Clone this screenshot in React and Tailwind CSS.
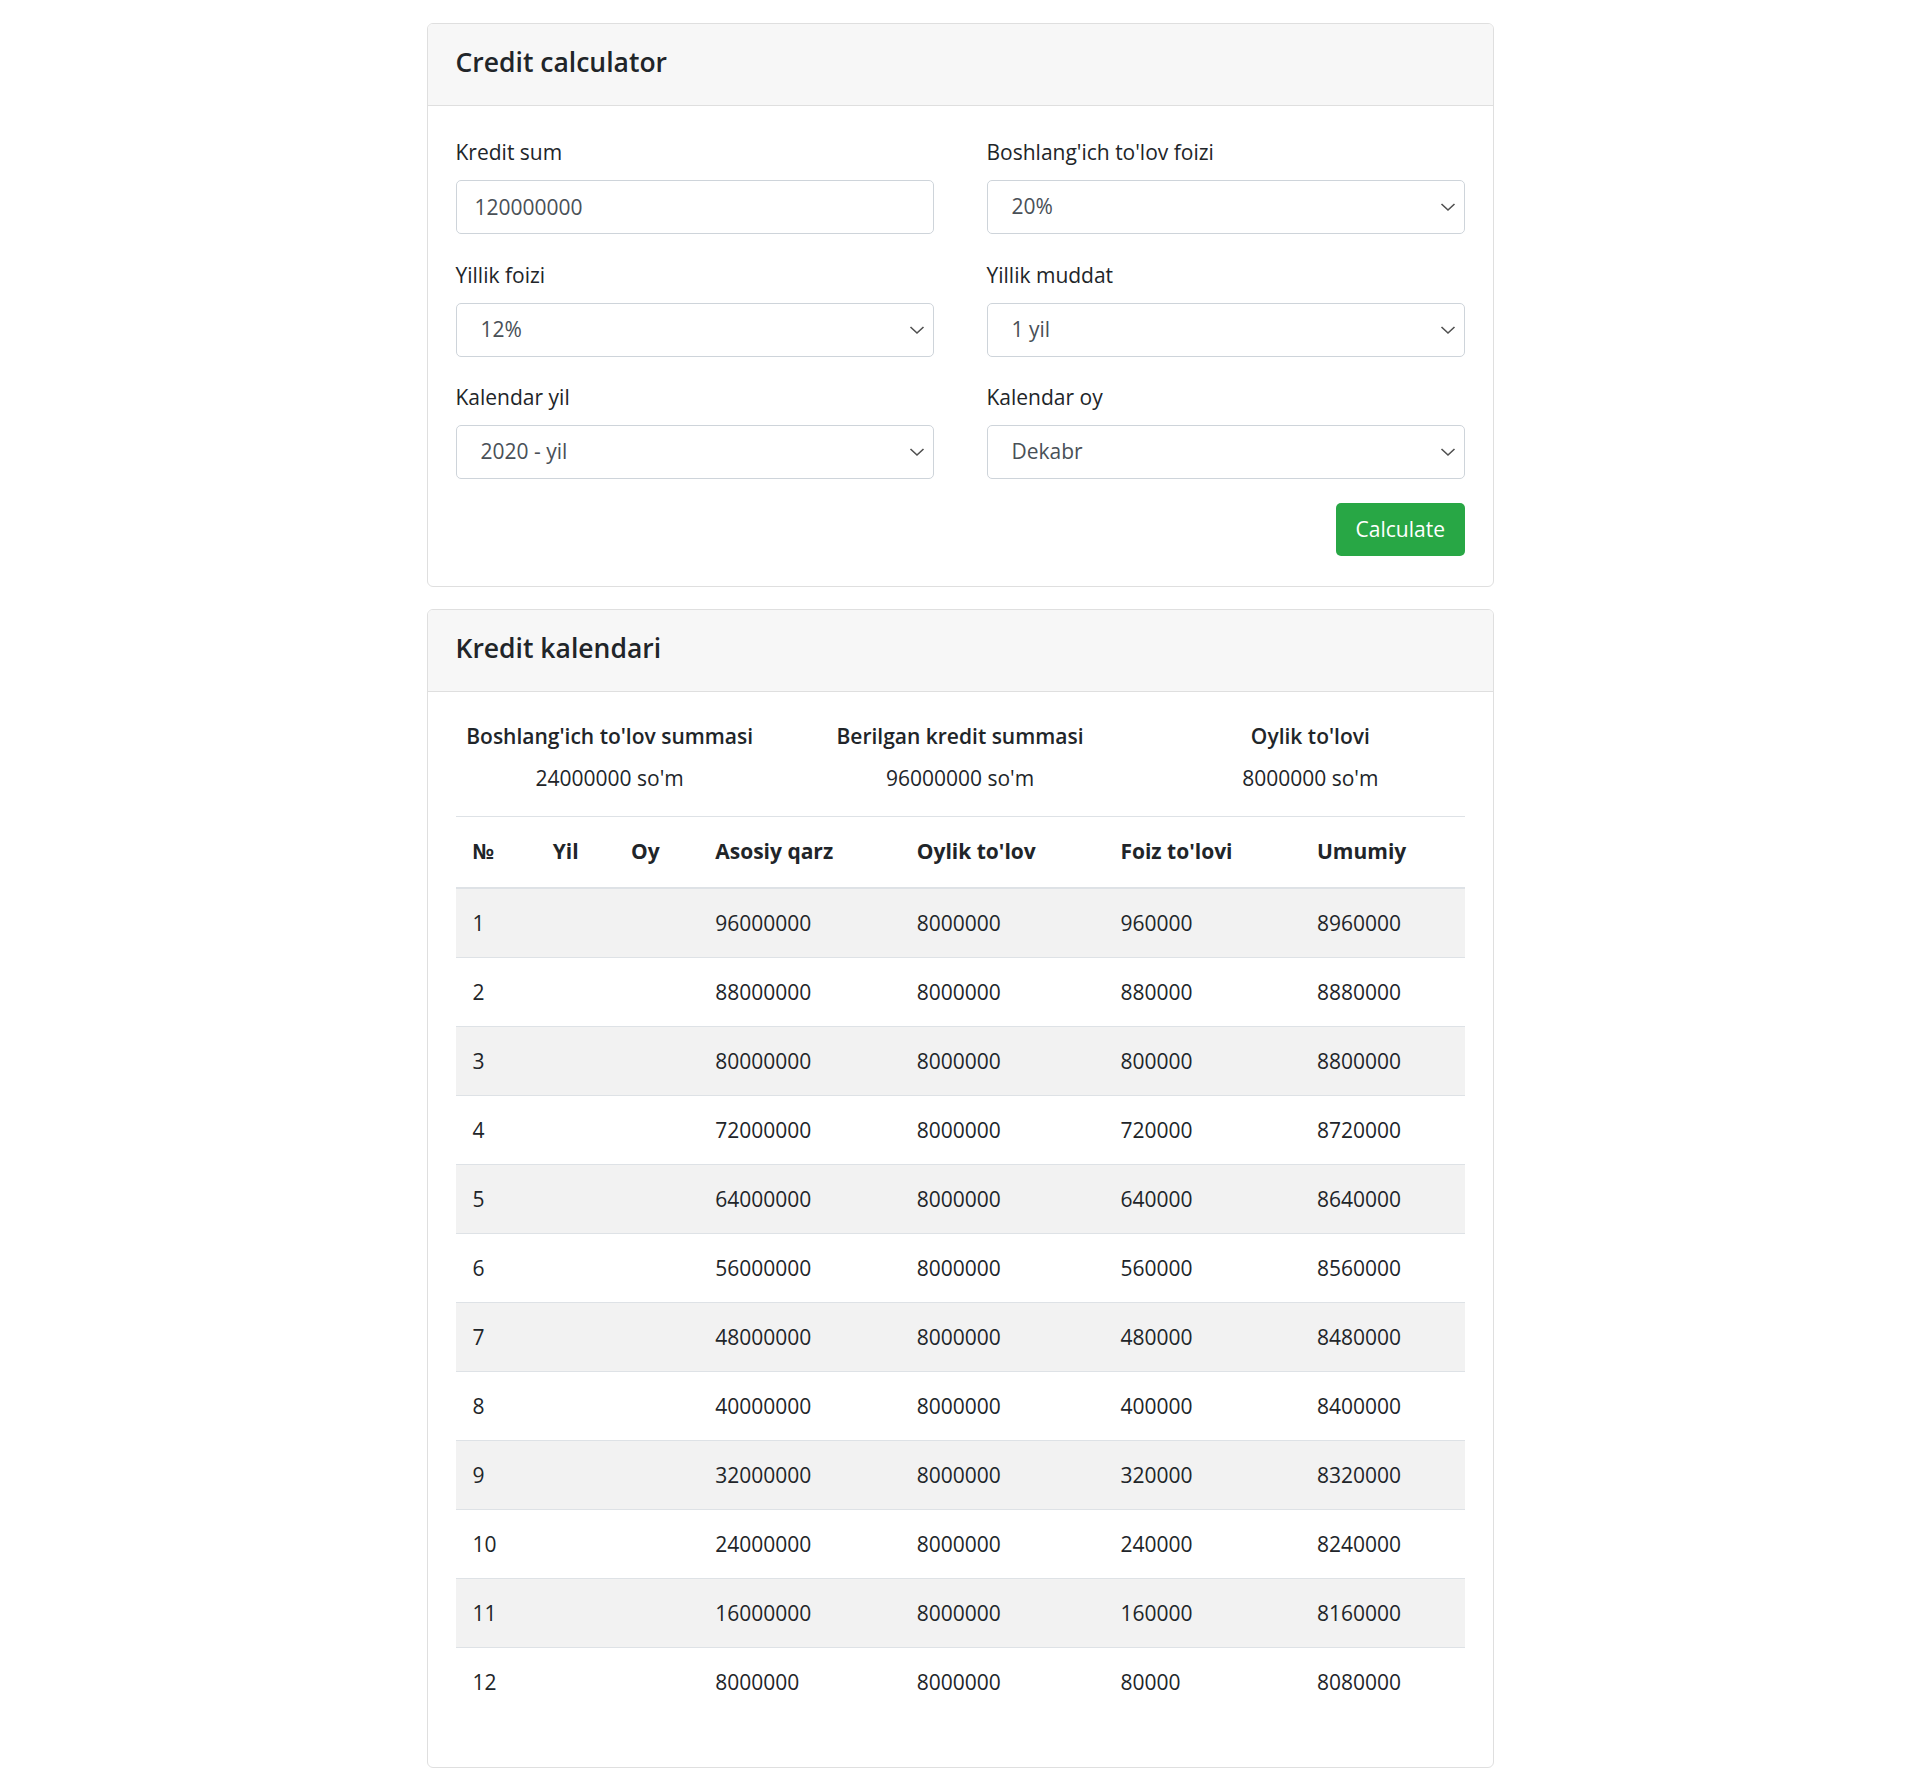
import React from 'react';

const ROWS = Array.from({ length: 12 }, (_, i) => {
  const principal = 96000000 - i * 8000000;
  const interest = principal / 100;
  return { n: i + 1, principal, monthly: 8000000, interest, total: 8000000 + interest };
});

const Chevron = () => (
  <svg
    className="pointer-events-none absolute right-[9px] top-1/2 -translate-y-1/2"
    width="16"
    height="9"
    viewBox="0 0 16 9"
    fill="none"
  >
    <path d="M1.5 1.5 8 7.5l6.5-6" stroke="#505050" strokeWidth="1.6" />
  </svg>
);

const Field = ({ label, children }) => (
  <div className="flex flex-col">
    <label className="mb-[11px] h-[34px] text-[21px] leading-[34px]">{label}</label>
    {children}
  </div>
);

const SelectBox = ({ value, options }) => (
  <div className="relative">
    <select
      defaultValue={value}
      className="h-[54px] w-full appearance-none rounded-[5px] border border-[#ced4da] bg-white pl-[24px] pr-[40px] text-[21px] text-[#495057] outline-none"
    >
      {options.map((o) => (
        <option key={o} value={o}>{o}</option>
      ))}
    </select>
    <Chevron />
  </div>
);

const CardHeader = ({ title }) => (
  <div className="flex h-[82px] items-center border-b border-[#dfdfdf] bg-[#f7f7f7] px-[28px] pb-[6px]">
    <h5 className="text-[26.5px] font-semibold leading-[34px]">{title}</h5>
  </div>
);

export default function App() {
  return (
    <div className="min-h-screen bg-white font-['Open_Sans',sans-serif] text-[#212529]">
      <div className="mx-auto flex w-[1067px] flex-col gap-[22px] pb-[2px] pt-[23px]">
        <div className="overflow-hidden rounded-[6px] border border-[#dfdfdf]">
          <CardHeader title="Credit calculator" />
          <div className="px-[28px] pb-[30px] pt-[29px]">
            <div className="grid grid-cols-2 gap-x-[53px] gap-y-[23.5px]">
              <Field label="Kredit sum">
                <input
                  defaultValue="120000000"
                  className="h-[54px] w-full rounded-[5px] border border-[#ced4da] px-[18px] text-[21px] text-[#495057] outline-none"
                />
              </Field>
              <Field label="Boshlang'ich to'lov foizi">
                <SelectBox value="20%" options={['10%', '20%', '30%']} />
              </Field>
              <Field label="Yillik foizi">
                <SelectBox value="12%" options={['12%', '18%', '24%']} />
              </Field>
              <Field label="Yillik muddat">
                <SelectBox value="1 yil" options={['1 yil', '2 yil', '3 yil']} />
              </Field>
              <Field label="Kalendar yil">
                <SelectBox value="2020 - yil" options={['2020 - yil', '2021 - yil']} />
              </Field>
              <Field label="Kalendar oy">
                <SelectBox value="Dekabr" options={['Noyabr', 'Dekabr']} />
              </Field>
            </div>
            <div className="mt-[24px] flex justify-end">
              <button className="h-[53px] rounded-[5px] bg-[#28a745] px-[19.5px] text-[21px] text-white">
                Calculate
              </button>
            </div>
          </div>
        </div>

        <div className="overflow-hidden rounded-[6px] border border-[#dfdfdf]">
          <CardHeader title="Kredit kalendari" />
          <div className="px-[28px] pb-[51px] pt-[29px]">
            <div className="grid grid-cols-3 gap-x-[42px] text-center text-[21px]">
              <div>
                <div className="h-[30px] font-semibold leading-[30px]">Boshlang'ich to'lov summasi</div>
                <div className="mt-[10px] leading-[34px]">24000000 so'm</div>
              </div>
              <div>
                <div className="h-[30px] font-semibold leading-[30px]">Berilgan kredit summasi</div>
                <div className="mt-[10px] leading-[34px]">96000000 so'm</div>
              </div>
              <div>
                <div className="h-[30px] font-semibold leading-[30px]">Oylik to'lovi</div>
                <div className="mt-[10px] leading-[34px]">8000000 so'm</div>
              </div>
            </div>

            <table className="mt-[21px] w-full table-fixed border-collapse text-left text-[21px]">
              <thead>
                <tr className="border-t border-b-2 border-t-[#dee2e6] border-b-[#dee2e6]">
                  <th className="w-[80px] px-[17px] pb-[18.5px] pt-[17px] font-bold leading-[34px]">№</th>
                  <th className="w-[78px] px-[17px] pb-[18.5px] pt-[17px] font-bold leading-[34px]">Yil</th>
                  <th className="w-[84px] px-[17px] pb-[18.5px] pt-[17px] font-bold leading-[34px]">Oy</th>
                  <th className="w-[201px] px-[17px] pb-[18.5px] pt-[17px] font-bold leading-[34px]">Asosiy qarz</th>
                  <th className="w-[203px] px-[17px] pb-[18.5px] pt-[17px] font-bold leading-[34px]">Oylik to'lov</th>
                  <th className="w-[196px] px-[17px] pb-[18.5px] pt-[17px] font-bold leading-[34px]">Foiz to'lovi</th>
                  <th className="w-[164px] px-[17px] pb-[18.5px] pt-[17px] font-bold leading-[34px]">Umumiy</th>
                </tr>
              </thead>
              <tbody>
                {ROWS.map((r) => (
                  <tr
                    key={r.n}
                    className={`border-t border-[#dee2e6] ${r.n % 2 === 1 ? 'bg-[#f2f2f2]' : 'bg-white'}`}
                  >
                    <td className="px-[17px] py-[17px] leading-[34px]">{r.n}</td>
                    <td className="px-[17px] py-[17px] leading-[34px]"></td>
                    <td className="px-[17px] py-[17px] leading-[34px]"></td>
                    <td className="px-[17px] py-[17px] leading-[34px]">{r.principal}</td>
                    <td className="px-[17px] py-[17px] leading-[34px]">{r.monthly}</td>
                    <td className="px-[17px] py-[17px] leading-[34px]">{r.interest}</td>
                    <td className="px-[17px] py-[17px] leading-[34px]">{r.total}</td>
                  </tr>
                ))}
              </tbody>
            </table>
          </div>
        </div>
      </div>
    </div>
  );
}
